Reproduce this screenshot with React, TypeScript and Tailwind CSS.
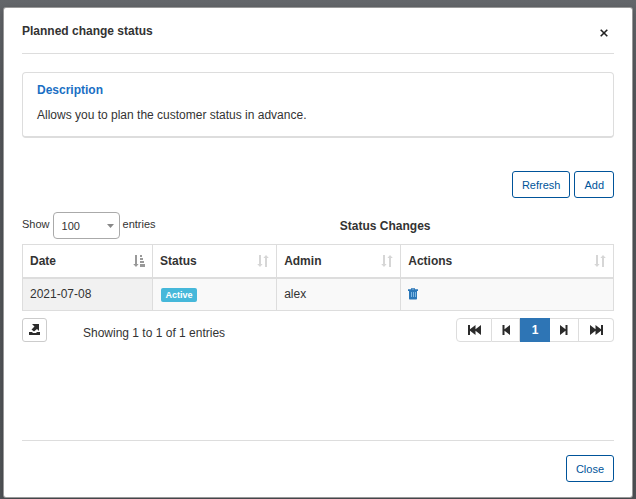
import { useState } from "react";

const outlineButton =
  "h-[27px] rounded-[3px] border border-[#00549a] bg-white px-[9px] text-[11px] leading-4 text-[#00549a]";

function SortBoth() {
  return (
    <svg width="12" height="12" viewBox="0 0 12 12" fill="#d6d6d6" aria-hidden="true">
      <path d="M2 0h2v9h1.600L3 12 .2 9H2zM8 12h2V3h1.800L9 0 6.400 3H8z" />
    </svg>
  );
}

function SortAscending() {
  return (
    <svg width="12" height="12" viewBox="0 0 12 12" fill="#999" aria-hidden="true">
      <path d="M2 0h2v9h1.600L3 12 .2 9H2zM7 0h2v2H7zM7 3h3v2H7zM7 6h4v2H7zM7 9h5v3H7z" />
    </svg>
  );
}

function Trash() {
  return (
    <svg width="10" height="12" viewBox="0 0 10 12" aria-hidden="true">
      <path fill="#2b77b8" d="M3 1.200C3 .5 3.400 0 4 0h2c.6 0 1 .5 1 1.200h3V3H0V1.200zM4 .8v.5h2V.8zM1 3h8v7.500c0 .7-.4 1-1 1H2c-.6 0-1-.3-1-1z" />
      <path stroke="#7fb8e2" strokeWidth="1" d="M3.500 4v5M5.500 4v5M7.500 4v5" />
    </svg>
  );
}

function Export() {
  return (
    <svg width="11" height="12" viewBox="0 0 11 12" fill="#2b2b2b" aria-hidden="true">
      <path d="M3 0h7v7L8 5 5 7.500 2.500 5.500 5.500 2.500zM0 8h3l1 1h3l1-1h3v3H0z" />
    </svg>
  );
}

function PageIcon({ double, back }: { double?: boolean; back?: boolean }) {
  const width = double ? 13 : 8;
  return (
    <svg
      width={width}
      height="10"
      viewBox={`0 0 ${width} 10`}
      fill="#2b2b2b"
      className={back ? "rotate-180" : ""}
      aria-hidden="true"
    >
      <path d={double ? "M0 0l5.500 4.300V0L11 4.300V0h2v10h-2V5.700L5.500 10V5.700L0 10z" : "M0 0l5.500 4.300V0h2v10h-2V5.700L0 10z"} />
    </svg>
  );
}

const pageButton = "flex h-6 items-center justify-center border-y border-r border-[#ddd] bg-white";

export default function App() {
  const [size, setSize] = useState("100");
  return (
    <div className="min-h-screen bg-linear-to-b from-[#63666a] via-[#54575b] via-20% to-[#505357] pt-2 pr-1 pb-[2px] pl-1 font-['Liberation_Sans',Arial,sans-serif] text-[12px] leading-4 text-[#333]">
      <div
        role="dialog"
        aria-labelledby="dialog-title"
        className="flex min-h-[calc(100vh-10px)] flex-col rounded-[2px] bg-white px-[18px] shadow-[0_0_0_1px_#999,0_2px_6px_#0004]"
      >
        <header className="flex h-[46px] items-center justify-between border-b border-[#ddd]">
          <h1 id="dialog-title" className="font-bold">Planned change status</h1>
          <button type="button" aria-label="Close dialog" className="mt-1 mr-[6px]">
            <svg width="8" height="8" viewBox="0 0 8 8" stroke="#222" strokeWidth="1.600" aria-hidden="true">
              <path d="M.7.7l6.600 6.600M7.300.7L.7 7.300" />
            </svg>
          </button>
        </header>

        <main className="grow">
          <section className="mt-[18px] h-[66px] rounded-[4px] border border-b-2 border-[#ddd] px-[14px] pt-[9px]">
            <h2 className="font-bold text-[#1a6fc4]">Description</h2>
            <p className="mt-[9px]">Allows you to plan the customer status in advance.</p>
          </section>

          <div className="mt-[33px] flex justify-end gap-1">
            <button type="button" className={outlineButton}>Refresh</button>
            <button type="button" className={outlineButton}>Add</button>
          </div>

          <div className="mt-[14px] flex items-center justify-between">
            <div className="flex items-start gap-[3px] text-[11px]">
              <label htmlFor="page-size" className="pt-1">Show</label>
              <span className="relative flex">
                <select
                  id="page-size"
                  value={size}
                  onChange={(event) => setSize(event.target.value)}
                  className="h-[27px] w-[67px] appearance-none rounded-[4px] border border-[#aaa] bg-white pl-2"
                >
                  <option>10</option>
                  <option>50</option>
                  <option>100</option>
                </select>
                <svg width="7" height="4" viewBox="0 0 7 4" fill="#888" className="pointer-events-none absolute top-3 right-[6px]" aria-hidden="true">
                  <path d="M0 0h7L3.500 4z" />
                </svg>
              </span>
              <span className="pt-1">entries</span>
            </div>
            <h2 className="mr-[31%] font-bold">Status Changes</h2>
          </div>

          <table className="mt-[5px] w-full table-fixed border-collapse border border-[#ddd] text-left">
            <colgroup>
              <col className="w-[22%]" />
              <col className="w-[21%]" />
              <col className="w-[21%]" />
              <col className="w-[36%]" />
            </colgroup>
            <thead>
              <tr className="h-[33px]">
                {["Date", "Status", "Admin", "Actions"].map((name) => (
                  <th key={name} scope="col" className="border border-b-2 border-[#ddd] px-[7px] font-bold">
                    <div className="flex items-center justify-between">
                      {name}
                      {name === "Date" ? <SortAscending /> : <SortBoth />}
                    </div>
                  </th>
                ))}
              </tr>
            </thead>
            <tbody>
              <tr className="h-[33px] bg-[#f9f9f9]">
                <td className="border border-[#ddd] bg-[#f1f1f1] px-[7px]">2021-07-08</td>
                <td className="border border-[#ddd] px-2">
                  <span className="mt-[2px] block h-[14px] w-9 rounded-[2px] bg-[#46b8da] text-center text-[9px] leading-[14px] font-bold text-white">Active</span>
                </td>
                <td className="border border-[#ddd] px-[7px]">alex</td>
                <td className="border border-[#ddd] px-[7px]">
                  <button type="button" aria-label="Delete" className="flex"><Trash /></button>
                </td>
              </tr>
            </tbody>
          </table>

          <div className="mt-[7px] flex items-start">
            <button type="button" aria-label="Export" className="flex h-6 w-[25px] items-center justify-center rounded-[3px] border border-[#ccc]">
              <Export />
            </button>
            <p className="mt-[7px] ml-9">Showing 1 to 1 of 1 entries</p>
            <nav aria-label="Pages" className="ml-auto flex">
              <button type="button" aria-label="First page" className={`${pageButton} w-9 rounded-l-[4px] border-l`}><PageIcon double back /></button>
              <button type="button" aria-label="Previous page" className={`${pageButton} w-7`}><PageIcon back /></button>
              <button type="button" aria-current="page" className="h-6 w-[30px] bg-[#2e75b5] font-bold text-white">1</button>
              <button type="button" aria-label="Next page" className={`${pageButton} w-[29px]`}><PageIcon /></button>
              <button type="button" aria-label="Last page" className={`${pageButton} w-[35px] rounded-r-[4px]`}><PageIcon double /></button>
            </nav>
          </div>
        </main>

        <footer className="flex h-[57px] justify-end border-t border-[#ddd] pt-[14px]">
          <button type="button" className={outlineButton}>Close</button>
        </footer>
      </div>
    </div>
  );
}
